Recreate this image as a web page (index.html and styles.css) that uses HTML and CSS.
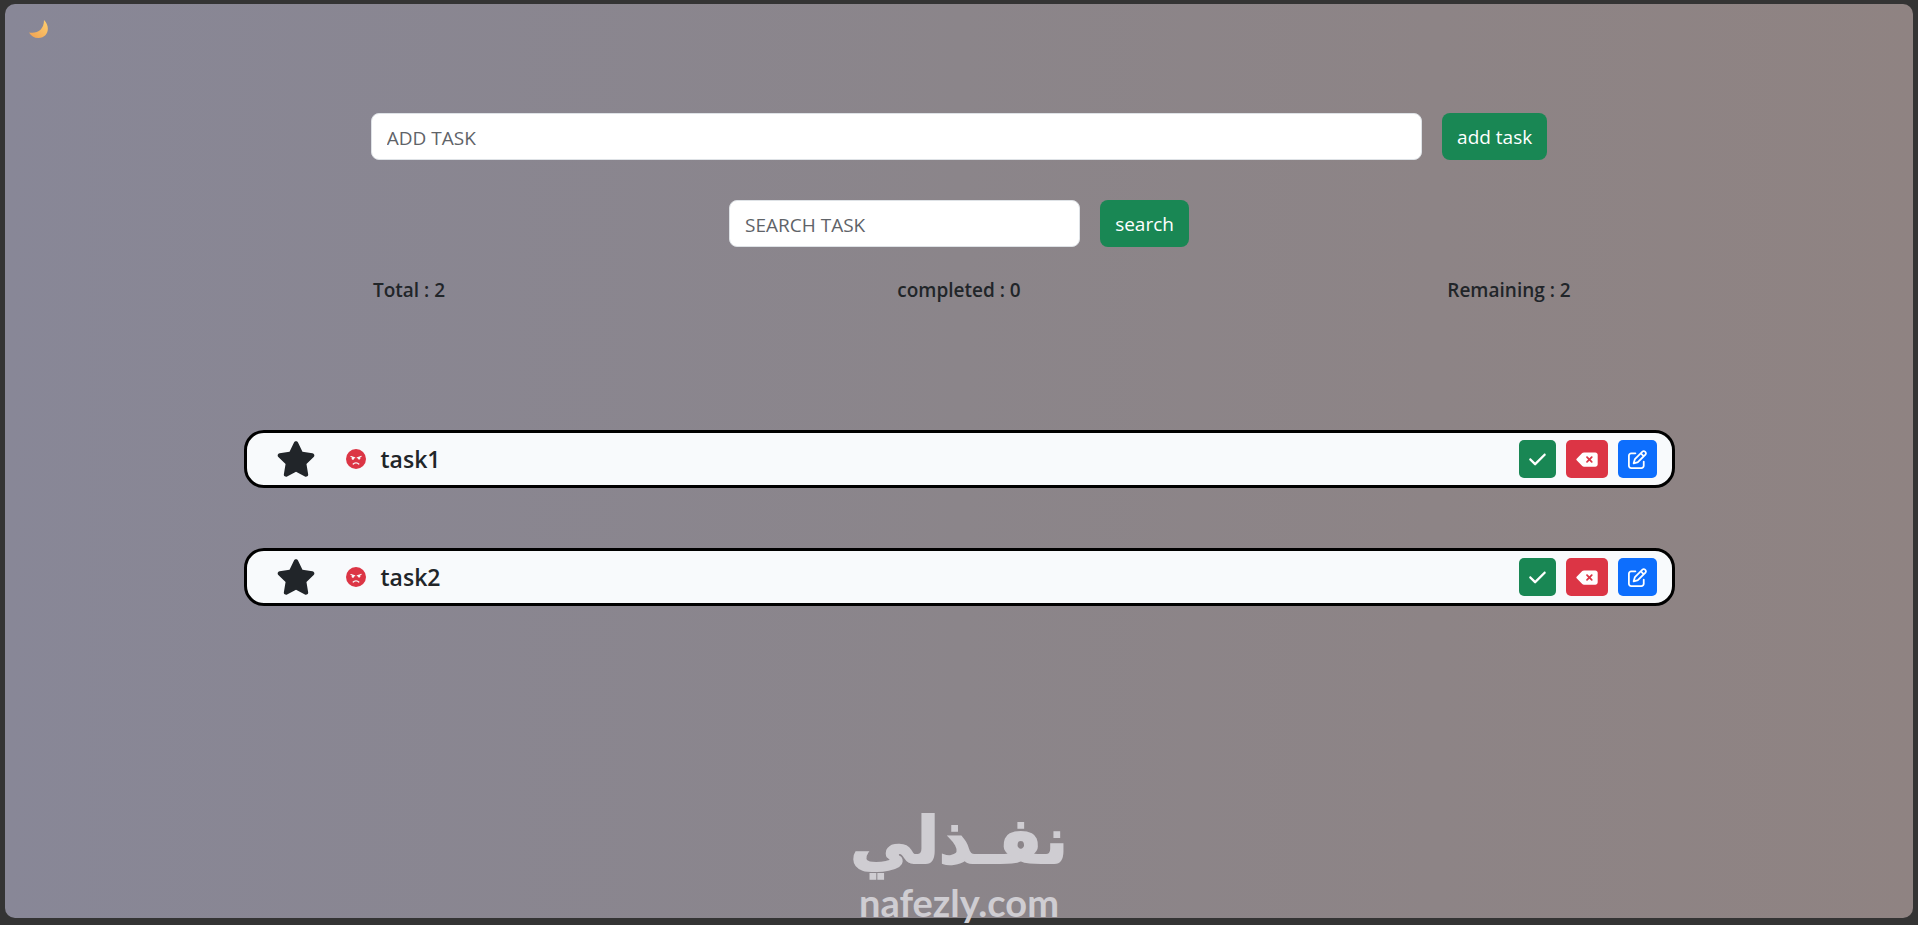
FILE: index.html
```html
<!DOCTYPE html>
<html lang="en">
<head>
  <meta charset="UTF-8" />
  <meta name="viewport" content="width=device-width, initial-scale=1.0"/>
  <title>To Do List</title>
  <link rel="stylesheet" href="styles.css">
</head>
<body>
  <!-- icons -->
  <svg width="0" height="0" class="sprite" aria-hidden="true">
    <symbol id="star" viewBox="0 0 576 512"><path d="M316.9 18C311.6 7 300.4 0 288.1 0s-23.4 7-28.8 18L195 150.3 51.4 171.5c-12 1.8-22 10.2-25.7 21.7s-.7 24.2 7.9 32.7L137.8 329 113.2 474.7c-2 12 3 24.2 12.9 31.3s23 8 33.8 2.3l128.3-68.5 128.3 68.5c10.8 5.7 23.9 4.9 33.8-2.3s14.9-19.3 12.9-31.3L438.5 329 542.7 225.9c8.6-8.5 11.7-21.2 7.9-32.7s-13.7-19.9-25.7-21.7L381.2 150.3 316.9 18z"/></symbol>
    <symbol id="angry" viewBox="0 0 512 512"><path fill-rule="evenodd" d="M0 256a256 256 0 1 1 512 0A256 256 0 1 1 0 256zM338.7 395.9c6.6-5.9 7.1-16 1.2-22.6C323.8 355.4 295.7 336 256 336s-67.8 19.4-83.9 37.3c-5.9 6.6-5.4 16.7 1.2 22.6s16.7 5.4 22.6-1.2c11.7-13 31.6-26.7 60.1-26.7s48.4 13.7 60.1 26.7c5.9 6.6 16 7.1 22.6 1.2zM176.4 272c17.7 0 32-14.3 32-32c0-1.5-.1-3-.3-4.4l10.9 3.6c8.4 2.8 17.4-1.7 20.2-10.1s-1.7-17.4-10.1-20.2l-96-32c-8.4-2.8-17.4 1.7-20.2 10.1s1.7 17.4 10.1 20.2l30.7 10.2c-5.8 5.8-9.3 13.8-9.3 22.6c0 17.7 14.3 32 32 32zm192-32c0-8.9-3.6-17-9.5-22.8l30.2-10.1c8.4-2.8 12.9-11.9 10.1-20.2s-11.9-12.9-20.2-10.1l-96 32c-8.4 2.8-12.9 11.9-10.1 20.2s11.9 12.9 20.2 10.1l11.7-3.9c-.2 1.5-.3 3.1-.3 4.7c0 17.7 14.3 32 32 32s32-14.3 32-32z"/></symbol>
    <symbol id="check" viewBox="0 0 448 512"><path d="M438.6 105.4c12.5 12.5 12.5 32.8 0 45.3l-256 256c-12.5 12.5-32.8 12.5-45.3 0l-128-128c-12.5-12.5-12.5-32.8 0-45.3s32.8-12.5 45.3 0L160 338.7 393.4 105.4c12.5-12.5 32.8-12.5 45.3 0z"/></symbol>
    <symbol id="delete" viewBox="0 0 576 512"><path fill-rule="evenodd" d="M576 128c0-35.3-28.7-64-64-64H205.3c-17 0-33.3 6.7-45.3 18.7L9.4 233.4c-6 6-9.4 14.1-9.4 22.6s3.4 16.6 9.4 22.6L160 429.3c12 12 28.3 18.7 45.3 18.7H512c35.3 0 64-28.7 64-64V128zM271 175c9.4-9.4 24.6-9.4 33.9 0l47 47 47-47c9.4-9.4 24.6-9.4 33.9 0s9.4 24.6 0 33.9l-47 47 47 47c9.4 9.4 9.4 24.6 0 33.9s-24.6 9.4-33.9 0l-47-47-47 47c-9.4 9.4-24.6 9.4-33.9 0s-9.4-24.6 0-33.9l47-47-47-47c-9.4-9.4-9.4-24.6 0-33.9z"/></symbol>
    <symbol id="edit" viewBox="0 0 512 512"><path d="M441 58.9L453.1 71c9.4 9.4 9.4 24.6 0 33.9L424 134.1 377.9 88 407 58.9c9.4-9.4 24.6-9.4 33.9 0zM209.8 256.2L344 121.9 390.1 168 255.8 302.2c-2.9 2.9-6.5 5-10.4 6.1l-58.5 16.7 16.7-58.5c1.1-3.9 3.2-7.5 6.1-10.4zM373.1 25L175.8 222.2c-8.7 8.7-15 19.4-18.3 31.1l-28.6 100c-2.4 8.4-.1 17.4 6.1 23.6s15.2 8.5 23.6 6.1l100-28.6c11.8-3.4 22.5-9.7 31.1-18.3L487 138.9c28.1-28.1 28.1-73.7 0-101.8L474.9 25C446.8-3.1 401.2-3.1 373.1 25zM88 64C39.4 64 0 103.4 0 152V424c0 48.6 39.4 88 88 88H360c48.6 0 88-39.4 88-88V312c0-13.3-10.7-24-24-24s-24 10.7-24 24V424c0 22.1-17.9 40-40 40H88c-22.1 0-40-17.9-40-40V152c0-22.1 17.9-40 40-40H200c13.3 0 24-10.7 24-24s-10.7-24-24-24H88z"/></symbol>
  </svg>

  <div class="app">
    <header>
      <button class="mode" type="button" aria-label="Dark mode">
        <svg viewBox="0 0 20 20" width="20" height="20">
          <defs>
            <linearGradient id="moonFill" x1="0" y1="1" x2="1" y2="0">
              <stop offset="0" stop-color="#f0a050"/>
              <stop offset="1" stop-color="#ffd070"/>
            </linearGradient>
          </defs>
          <path fill="url(#moonFill)" d="M15 1C22 8 19 19 9.500 19C5 19 2 17 0 13.500C8 15 15 11 15 1z"/>
        </svg>
      </button>
    </header>

    <form class="row add-form">
      <input type="text" class="field" placeholder="ADD TASK" aria-label="Add task">
      <button type="button" class="btn">add task</button>
    </form>

    <form class="row search-form">
      <input type="text" class="field" placeholder="SEARCH TASK" aria-label="Search task">
      <button type="button" class="btn">search</button>
    </form>

    <div class="stats">
      <span>Total : 2</span>
      <span>completed : 0</span>
      <span>Remaining : 2</span>
    </div>

    <main class="tasks">
      <div class="task">
        <svg class="star"><use href="#star"/></svg>
        <svg class="angry"><use href="#angry"/></svg>
        <h2>task1</h2>
        <div class="actions">
          <button type="button" class="done" aria-label="Complete"><svg><use href="#check"/></svg></button>
          <button type="button" class="delete" aria-label="Delete"><svg><use href="#delete"/></svg></button>
          <button type="button" class="edit" aria-label="Edit"><svg><use href="#edit"/></svg></button>
        </div>
      </div>
      <div class="task">
        <svg class="star"><use href="#star"/></svg>
        <svg class="angry"><use href="#angry"/></svg>
        <h2>task2</h2>
        <div class="actions">
          <button type="button" class="done" aria-label="Complete"><svg><use href="#check"/></svg></button>
          <button type="button" class="delete" aria-label="Delete"><svg><use href="#delete"/></svg></button>
          <button type="button" class="edit" aria-label="Edit"><svg><use href="#edit"/></svg></button>
        </div>
      </div>
    </main>
  </div>

  <div class="watermark">
    <span class="brand" lang="ar" dir="rtl">نفـذلي</span>
    <span class="site">nafezly.com</span>
  </div>
</body>
</html>
```
FILE: styles.css
```css
:root {
  --text-color: #212529;
  --green: #198754;
  --red: #dc3545;
  --blue: #0d6efd;
  --frame-color: #343434;
}

* {
  box-sizing: border-box;
}

body {
  margin: 0;
  padding: 4px 5px 7px 5px;
  height: 100vh;
  overflow: hidden;
  font-family: "Segoe UI", "Open Sans", "Noto Sans", sans-serif;
  font-size: 19px;
  line-height: 29px;
  color: var(--text-color);
  background-color: var(--frame-color);
}

.sprite {
  position: absolute;
}

.app {
  height: 100%;
  border-radius: 10px;
  background: linear-gradient(to right, #888797, #8b858a 50%, #8f8382);
}

header {
  height: 109px;
  padding: 15px 24px;
}

button {
  border: none;
  font: inherit;
  color: #fff;
  cursor: pointer;
}

.mode {
  display: block;
  padding: 0;
  background: none;
}

.mode svg {
  display: block;
}

.row {
  display: flex;
  justify-content: center;
  gap: 20px;
  margin-bottom: 40px;
}

.field {
  height: 47px;
  padding: 2px 15px 0;
  font: inherit;
  color: var(--text-color);
  background: #fff;
  border: 1px solid #dee2e6;
  border-radius: 8px;
}

.field::placeholder {
  color: #5f6368;
  opacity: 1;
}

.add-form .field {
  width: 55.1%;
}

.search-form .field {
  width: 18.4%;
}

.btn {
  height: 47px;
  padding: 2px 15px 0;
  border-radius: 8px;
  background-color: var(--green);
}

.search-form {
  margin-bottom: 29px;
}

.stats {
  display: grid;
  grid-template-columns: repeat(3, 1fr);
  max-width: 1650px;
  margin: 0 auto;
  text-align: center;
  font-weight: 600;
}

.tasks {
  width: 75%;
  margin: 125px auto 0;
}

.task {
  display: flex;
  align-items: center;
  height: 58px;
  margin-bottom: 60px;
  padding: 0 15px 0 29px;
  border: 3px solid #000;
  border-radius: 20px;
  background-color: #f8fafc;
}

.star {
  width: 40px;
  height: 36px;
  margin-right: 30px;
  fill: var(--text-color);
}

.angry {
  width: 20px;
  height: 20px;
  margin-right: 15px;
  fill: var(--red);
}

.task h2 {
  margin: 0;
  font-size: 23px;
  font-weight: 600;
}

.actions {
  display: flex;
  gap: 10px;
  margin-left: auto;
}

.actions button {
  display: flex;
  align-items: center;
  height: 38px;
  padding: 0 10px;
  border-radius: 5px;
}

.actions svg {
  width: 19px;
  height: 19px;
  fill: #fff;
}

.actions .done {
  background-color: var(--green);
}

.actions .done svg {
  width: 17px;
}

.actions .delete {
  background-color: var(--red);
}

.actions .delete svg {
  width: 22px;
}

.actions .edit {
  background-color: var(--blue);
}

.watermark {
  position: absolute;
  left: 0;
  right: 0;
  bottom: 0;
  text-align: center;
  color: #cfcdd2;
  pointer-events: none;
}

.watermark span {
  display: block;
}

.brand {
  font-family: "DejaVu Sans", sans-serif;
  font-size: 64px;
  font-weight: bold;
  line-height: 76px;
  -webkit-text-stroke: 2px #cfcdd2;
}

.site {
  font-family: Lato, sans-serif;
  font-size: 38px;
  font-weight: bold;
  line-height: 46px;
}
```
